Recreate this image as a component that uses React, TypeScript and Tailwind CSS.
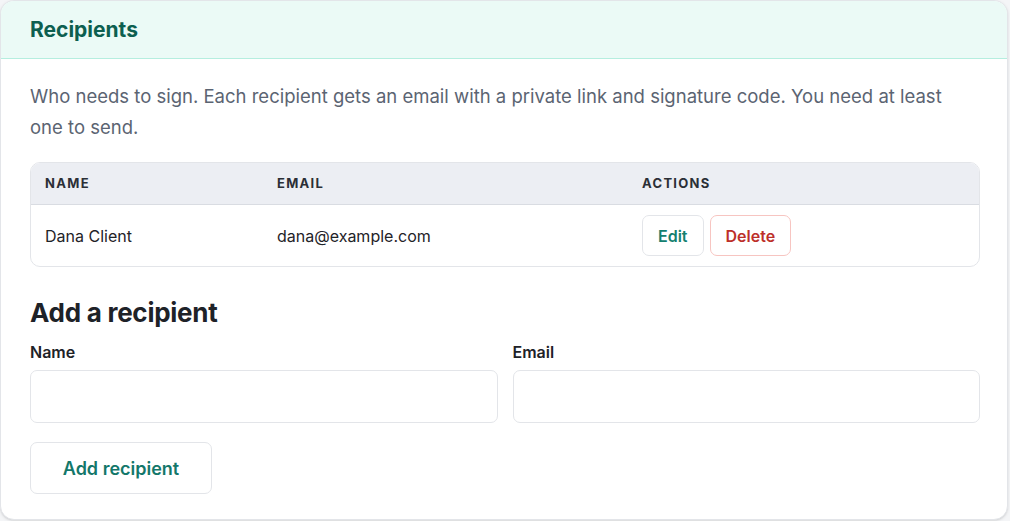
export default function App() {
  return (
    <div className="min-h-screen bg-[#f4f5f7] pr-[2px] pb-[1px] font-['Inter',sans-serif]">
      <section className="overflow-hidden rounded-[14px] border border-[#e3e5e9] bg-white shadow-sm">
        <header className="border-b border-[#b5eedf] bg-[#ebfaf6] px-[29px] py-[15px]">
          <h2 className="text-[21px] font-bold leading-[27px] text-[#0d5f50]">Recipients</h2>
        </header>

        <div className="pl-[29px] pr-[27px] pt-[22px] pb-[25px]">
          <p className="pr-[20px] text-[18.5px] leading-[31px] text-[#5b6472]">
            Who needs to sign. Each recipient gets an email with a private link and signature code. You need at least
            one to send.
          </p>

          <div className="mt-[19px] overflow-hidden rounded-[10px] border border-[#e3e5e9]">
            <div className="grid grid-cols-[232px_365px_1fr] border-b border-[#d9dce2] bg-[#eceef3] px-[14px] py-[12px] text-[13px] font-bold uppercase leading-[17px] tracking-[0.1em] text-[#2b2f36]">
              <span>Name</span>
              <span>Email</span>
              <span>Actions</span>
            </div>
            <div className="grid grid-cols-[232px_365px_1fr] items-center px-[14px] py-[10px] text-[16px] text-[#1f2328]">
              <span>Dana Client</span>
              <span>dana@example.com</span>
              <div className="flex gap-[6px]">
                <button className="h-[41px] rounded-[7px] border border-[#e3e5e9] bg-white px-[15px] text-[16px] font-semibold text-[#14806f]">
                  Edit
                </button>
                <button className="h-[41px] rounded-[7px] border border-[#f7c5c1] bg-white px-[15px] text-[16px] font-semibold text-[#bd2f2a]">
                  Delete
                </button>
              </div>
            </div>
          </div>

          <h3 className="mt-[28px] text-[26px] font-bold leading-[36px] tracking-[-0.01em] text-[#1e2228]">
            Add a recipient
          </h3>

          <div className="mt-[10px] grid grid-cols-2 gap-[15px]">
            <label className="flex flex-col gap-[7px]">
              <span className="text-[16px] font-semibold leading-[22px] text-[#1e2228]">Name</span>
              <input
                type="text"
                className="h-[53px] rounded-[7px] border border-[#e3e5e9] bg-white px-3 text-[16px] outline-none"
              />
            </label>
            <label className="flex flex-col gap-[7px]">
              <span className="text-[16px] font-semibold leading-[22px] text-[#1e2228]">Email</span>
              <input
                type="email"
                className="h-[53px] rounded-[7px] border border-[#e3e5e9] bg-white px-3 text-[16px] outline-none"
              />
            </label>
          </div>

          <button className="mt-[19px] h-[52px] w-[182px] rounded-[7px] border border-[#e3e5e9] bg-white text-[18px] font-semibold text-[#13776a]">
            Add recipient
          </button>
        </div>
      </section>
    </div>
  );
}
